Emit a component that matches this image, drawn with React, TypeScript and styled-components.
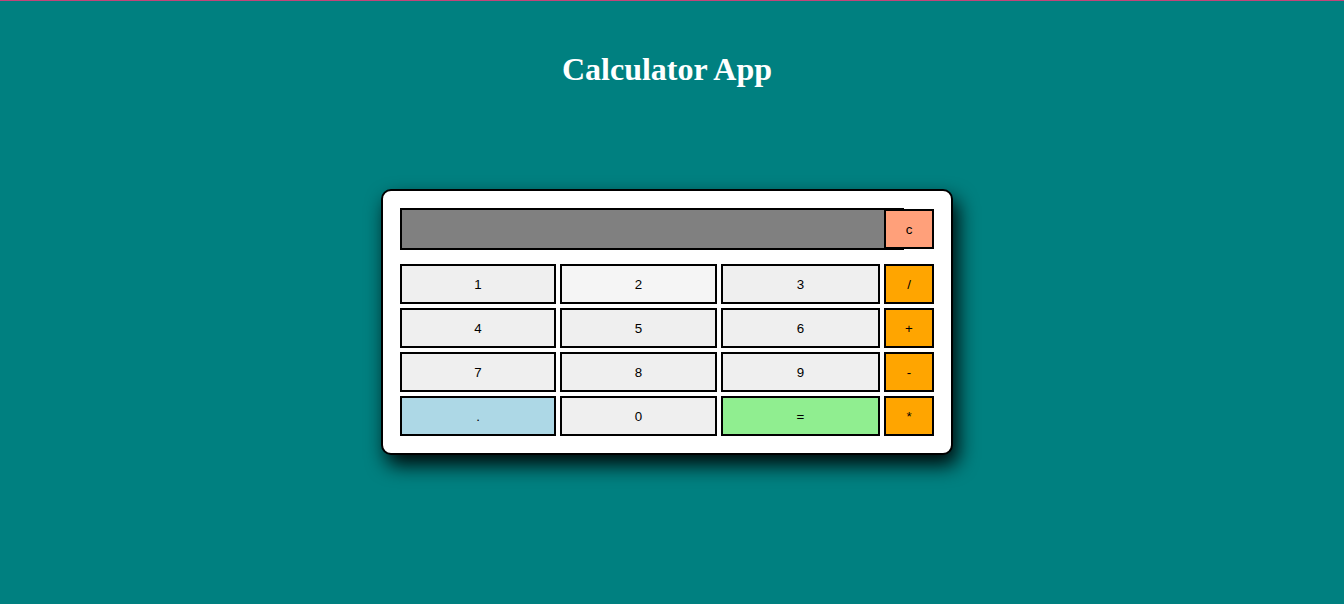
import React from "react";
import styled, { createGlobalStyle } from "styled-components";

const GlobalStyle = createGlobalStyle`
  html, body {
    margin: 0;
    padding: 0;
    background: #008080;
  }
  body {
    border-top: 1px solid #c2457a;
    min-height: 603px;
  }
`;

const Page = styled.div`
  display: flex;
  flex-direction: column;
  align-items: center;
  padding-right: 10px;
`;

const Title = styled.h1`
  margin: 50px 0 0;
  font-family: "Liberation Serif", "Times New Roman", serif;
  font-weight: bold;
  font-size: 32px;
  line-height: 37px;
  color: #ffffff;
`;

const Card = styled.div`
  margin-top: 101px;
  background: #ffffff;
  border: 2px solid #000000;
  border-radius: 10px;
  padding: 17px;
  box-shadow: 5px 10px 20px rgba(0, 0, 0, 0.95);
  display: flex;
  flex-direction: column;
  gap: 14px;
`;

const DisplayRow = styled.div`
  display: flex;
  align-items: center;
`;

const Display = styled.div`
  width: 500px;
  height: 38px;
  background: #808080;
  border: 2px solid #000000;
`;

const Grid = styled.div`
  display: grid;
  grid-template-columns: 156px 157px 159px 50px;
  grid-auto-rows: 40px;
  gap: 4px;
`;

const Key = styled.button<{ $bg?: string }>`
  box-sizing: border-box;
  margin: 0;
  padding: 0;
  height: 40px;
  border: 2px solid #000000;
  border-radius: 0;
  background: ${(p) => p.$bg ?? "#efefef"};
  color: #000000;
  font-family: "Liberation Sans", Arial, sans-serif;
  font-size: 13.33px;
  cursor: pointer;
`;

const ClearKey = styled(Key)`
  width: 50px;
  margin-left: -20px;
  position: relative;
`;

const keys: { label: string; bg?: string }[] = [
  { label: "1" },
  { label: "2", bg: "#f5f5f5" },
  { label: "3" },
  { label: "/", bg: "#ffa500" },
  { label: "4" },
  { label: "5" },
  { label: "6" },
  { label: "+", bg: "#ffa500" },
  { label: "7" },
  { label: "8" },
  { label: "9" },
  { label: "-", bg: "#ffa500" },
  { label: ".", bg: "#add8e6" },
  { label: "0" },
  { label: "=", bg: "#90ee90" },
  { label: "*", bg: "#ffa500" },
];

export default function App() {
  return (
    <>
      <GlobalStyle />
      <Page>
        <Title>Calculator App</Title>
        <Card>
          <DisplayRow>
            <Display />
            <ClearKey $bg="#ffa07a">c</ClearKey>
          </DisplayRow>
          <Grid>
            {keys.map((k) => (
              <Key key={k.label} $bg={k.bg}>
                {k.label}
              </Key>
            ))}
          </Grid>
        </Card>
      </Page>
    </>
  );
}
